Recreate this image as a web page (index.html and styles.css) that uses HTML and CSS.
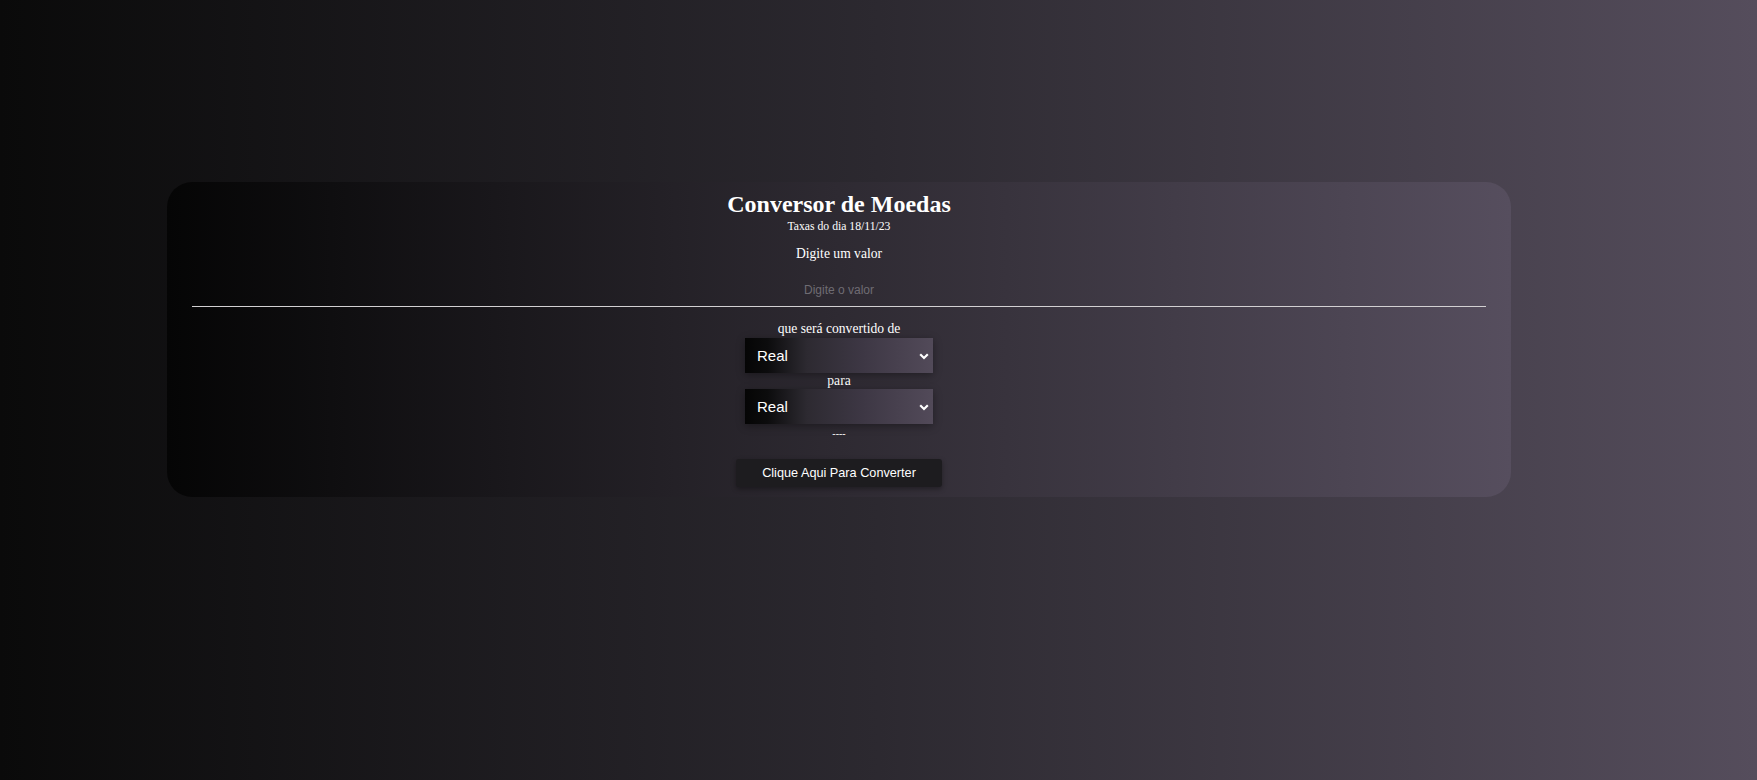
FILE: index.html
```html
<!DOCTYPE html>
<html lang="pt-BR">
<head>
<meta charset="utf-8">
<title>Conversor de Moedas</title>
<link rel="stylesheet" href="styles.css">
</head>
<body>
<main class="card">
  <h2 class="title">Conversor de Moedas</h2>
  <p class="date">Taxas do dia 18/11/23</p>
  <label class="label label-value" for="valor">Digite um valor</label>
  <input class="amount" id="valor" type="text" placeholder="Digite o valor">
  <label class="label label-from" for="de">que será convertido de</label>
  <div class="select-wrap select-from">
    <select class="currency" id="de">
      <option>Real</option>
      <option>Dólar</option>
      <option>Euro</option>
    </select>
    <svg class="chevron" width="10" height="7" viewBox="0 0 10 7"><path d="M1.2 1.3 L5 5 L8.8 1.3" fill="none" stroke="#fff" stroke-width="2.2"/></svg>
  </div>
  <label class="label" for="para">para</label>
  <div class="select-wrap">
    <select class="currency" id="para">
      <option>Real</option>
      <option>Dólar</option>
      <option>Euro</option>
    </select>
    <svg class="chevron" width="10" height="7" viewBox="0 0 10 7"><path d="M1.2 1.3 L5 5 L8.8 1.3" fill="none" stroke="#fff" stroke-width="2.2"/></svg>
  </div>
  <p class="result">----</p>
  <button class="convert" type="button">Clique Aqui Para Converter</button>
</main>
</body>
</html>
```
FILE: styles.css
```css
html, body {
  margin: 0;
  padding: 0;
}

body {
  min-height: 100vh;
  overflow: hidden;
  background: linear-gradient(to right, #0a0a0a 0%, #2c2930 50%, #554d5c 100%);
  font-family: "Liberation Serif", "Times New Roman", serif;
  color: #ffffff;
}

.card {
  box-sizing: border-box;
  width: 1344px;
  margin: 182px 0 0 167px;
  padding: 8px 25px 10px;
  border-radius: 25px;
  background: linear-gradient(to right, #050505 0%, #2e2a32 50%, #564e5e 100%);
  display: flex;
  flex-direction: column;
  align-items: center;
}

.title {
  margin: 0;
  font-size: 24px;
  line-height: 28px;
  font-weight: bold;
}

.date {
  margin: 1.5px 0 0;
  font-size: 11.7px;
  line-height: 13px;
}

.label {
  font-size: 13.6px;
  line-height: 16px;
}

.label-value {
  margin-top: 13.5px;
  line-height: 15px;
}

.label-from {
  margin-top: 14px;
}

.amount {
  box-sizing: border-box;
  align-self: stretch;
  margin: 13px 0 0;
  padding: 9px 0;
  height: 33px;
  border: none;
  border-bottom: 1px solid #d2d0d2;
  background: transparent;
  color: #ffffff;
  font-family: "Liberation Sans", Arial, sans-serif;
  font-size: 12px;
  line-height: 14px;
  text-align: center;
  outline: none;
}

.amount::placeholder {
  color: #6f6c73;
}

.select-wrap {
  position: relative;
  width: 188px;
  height: 35px;
}

.select-from {
  margin-top: 1px;
}

.currency {
  appearance: none;
  -webkit-appearance: none;
  box-sizing: border-box;
  width: 188px;
  height: 35px;
  margin: 0;
  padding: 0 20px 0 12px;
  border: none;
  border-radius: 0;
  background: linear-gradient(to right, #050505 0%, #0c0c0d 12%, #2d2a31 33%, #3d3744 62%, #524a59 100%);
  box-shadow: 0 2px 8px rgba(0, 0, 0, 0.35);
  color: #ffffff;
  font-family: "Liberation Sans", Arial, sans-serif;
  font-size: 15px;
  outline: none;
}

.chevron {
  position: absolute;
  right: 4px;
  top: 15px;
  pointer-events: none;
}

.result {
  margin: 2px 0 0;
  font-size: 10px;
  line-height: 16px;
  height: 16px;
}

.convert {
  margin-top: 17px;
  width: 206px;
  height: 28px;
  padding: 0;
  border: none;
  border-radius: 3px;
  background: #1d1c1f;
  box-shadow: 0 2px 5px rgba(0, 0, 0, 0.35);
  color: #ffffff;
  font-family: "Liberation Sans", Arial, sans-serif;
  font-size: 12.7px;
  cursor: pointer;
}
```
